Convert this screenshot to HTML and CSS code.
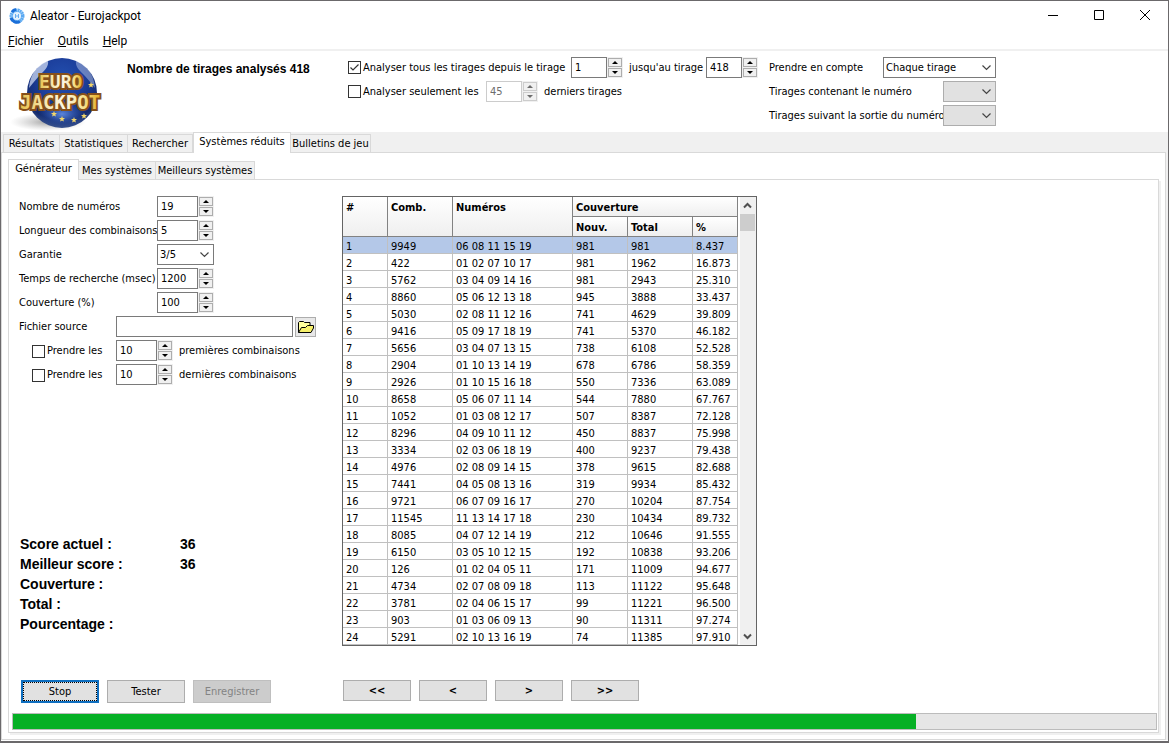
FILE: index.html
```
<!DOCTYPE html>
<html lang="fr">
<head>
    <meta charset="UTF-8">
    <meta name="viewport" content="width=device-width, initial-scale=1.0">
    <title>Aleator - Eurojackpot</title>
    <link rel="stylesheet" href="styles.css">
</head>
<body>
<div class="window">

  <header class="titlebar">
    <svg class="app-icon" viewBox="0 0 16 16">
      <circle cx="8" cy="8" r="5.500" fill="#b9dcfa" stroke="#5aa9f2" stroke-width="4" stroke-dasharray="1.600 .4"/>
      <path d="M2 10a6.200 6.200 0 0 0 9 3.500M3 4a6 6 0 0 1 4-2.500" fill="none" stroke="#1c6fd8" stroke-width="3"/>
      <circle cx="8" cy="8" r="4" fill="#e4f2fe"/>
      <path d="M6.500 6v4M9.500 6v4M6.500 8h3" stroke="#69aef0" stroke-width="1"/>
    </svg>
    <span class="title">Aleator - Eurojackpot</span>
    <div class="window-buttons">
      <button type="button" aria-label="Réduire"><svg viewBox="0 0 12 12"><path d="M1 5.500h10"/></svg></button>
      <button type="button" aria-label="Agrandir"><svg viewBox="0 0 12 12"><path d="M1.500 .5h9v9h-9z"/></svg></button>
      <button type="button" aria-label="Fermer"><svg viewBox="0 0 12 12"><path d="M1 0l10 10M11 0L1 10"/></svg></button>
    </div>
  </header>

  <nav class="menu">
    <a href="#"><u>F</u>ichier</a>
    <a href="#"><u>O</u>utils</a>
    <a href="#"><u>H</u>elp</a>
  </nav>

  <section class="top">
    <svg class="logo" viewBox="0 0 100 80">
      <defs>
        <radialGradient id="ball" cx=".5" cy=".3" r=".7">
          <stop offset="0" stop-color="#2350b0"/>
          <stop offset=".45" stop-color="#1c3f9c"/>
          <stop offset=".85" stop-color="#13296b"/>
          <stop offset="1" stop-color="#3b5590"/>
        </radialGradient>
        <radialGradient id="shadow">
          <stop offset="0" stop-color="#777" stop-opacity=".7"/>
          <stop offset="1" stop-color="#aaa" stop-opacity="0"/>
        </radialGradient>
        <radialGradient id="glow">
          <stop offset="0" stop-color="#5b86dc"/>
          <stop offset="1" stop-color="#2a55b4" stop-opacity="0"/>
        </radialGradient>
        <linearGradient id="gold">
          <stop offset="0" stop-color="#e6c04c"/>
          <stop offset=".3" stop-color="#f6e6ac"/>
          <stop offset=".55" stop-color="#fbf6e6"/>
          <stop offset=".8" stop-color="#f6e08c"/>
          <stop offset="1" stop-color="#e3ac22"/>
        </linearGradient>
      </defs>
      <ellipse cx="38" cy="70" rx="38" ry="9" fill="url(#shadow)"/>
      <circle cx="52" cy="41" r="35" fill="url(#ball)"/>
      <ellipse cx="52" cy="62" rx="24" ry="13" fill="url(#glow)"/>
      <path d="M19 36C20 22 28 12 38 9c1 5-3 9-7 13-4 4-7 8-12 14z" fill="#dbe6fa" opacity=".7"/>
      <path d="M85 36C84 22 76 12 66 9c-1 5 3 9 7 13 4 4 7 8 12 14z" fill="#dbe6fa" opacity=".4"/>
      <g class="logo-text">
        <text class="logo-euro" x="29" y="36">EURO</text>
        <text x="10" y="57">JACKPOT</text>
      </g>
      <g fill="#f2d66a">
        <path id="star" d="M44 59l.8 2 2.200.1-1.700 1.400.6 2.100-1.900-1.200-1.900 1.200.6-2.100-1.700-1.400 2.200-.1z"/>
        <use href="#star" x="8" y="5"/>
        <use href="#star" x="20" y="6"/>
        <use href="#star" x="30" y="2"/>
        <use href="#star" x="37" y="-29"/>
      </g>
    </svg>
    <h1 class="draw-count">Nombre de tirages analysés 418</h1>

    <div class="range">
      <div class="line">
        <input class="check" type="checkbox" id="all" checked>
        <label class="all-label" for="all">Analyser tous les tirages depuis le tirage</label>
        <span class="spin small"><input type="text" value="1" aria-label="Premier tirage"><span class="arrows"><button type="button" class="up" aria-label="Plus"></button><button type="button" class="down" aria-label="Moins"></button></span></span>
        <label class="until" for="last">jusqu'au tirage</label>
        <span class="spin small"><input type="text" id="last" value="418"><span class="arrows"><button type="button" class="up" aria-label="Plus"></button><button type="button" class="down" aria-label="Moins"></button></span></span>
      </div>
      <div class="line">
        <input class="check" type="checkbox" id="only">
        <label class="only-label" for="only">Analyser seulement les</label>
        <span class="spin small off"><input type="text" id="count" value="45" disabled><span class="arrows"><button type="button" class="up" aria-label="Plus" disabled></button><button type="button" class="down" aria-label="Moins" disabled></button></span></span>
        <label class="after" for="count">derniers tirages</label>
      </div>
    </div>

    <div class="filters">
      <div class="line"><label for="mode">Prendre en compte</label><select id="mode" class="wide"><option>Chaque tirage</option></select></div>
      <div class="line"><label for="with">Tirages contenant le numéro</label><select id="with" disabled></select></div>
      <div class="line"><label for="next">Tirages suivant la sortie du numéro</label><select id="next" disabled></select></div>
    </div>
  </section>

  <nav class="tabs main-tabs">
    <button type="button">Résultats</button>
    <button type="button">Statistiques</button>
    <button type="button">Rechercher</button>
    <button type="button" class="active">Systèmes réduits</button>
    <button type="button">Bulletins de jeu</button>
  </nav>

  <main class="outer">
    <nav class="tabs sub-tabs">
      <button type="button" class="active">Générateur</button>
      <button type="button">Mes systèmes</button>
      <button type="button">Meilleurs systèmes</button>
    </nav>

    <div class="inner">
      <div class="work">
        <div class="side">
          <form class="settings">
            <div class="row"><label for="n">Nombre de numéros</label>
              <span class="spin"><input type="text" id="n" value="19"><span class="arrows"><button type="button" class="up" aria-label="Plus"></button><button type="button" class="down" aria-label="Moins"></button></span></span></div>
            <div class="row"><label for="len">Longueur des combinaisons</label>
              <span class="spin"><input type="text" id="len" value="5"><span class="arrows"><button type="button" class="up" aria-label="Plus"></button><button type="button" class="down" aria-label="Moins"></button></span></span></div>
            <div class="row"><label for="gar">Garantie</label>
              <select id="gar" class="guarantee"><option>3/5</option></select></div>
            <div class="row"><label for="time">Temps de recherche (msec)</label>
              <span class="spin"><input type="text" id="time" value="1200"><span class="arrows"><button type="button" class="up" aria-label="Plus"></button><button type="button" class="down" aria-label="Moins"></button></span></span></div>
            <div class="row"><label for="cov">Couverture (%)</label>
              <span class="spin"><input type="text" id="cov" value="100"><span class="arrows"><button type="button" class="up" aria-label="Plus"></button><button type="button" class="down" aria-label="Moins"></button></span></span></div>
            <div class="row source"><label for="src">Fichier source</label>
              <input class="field" type="text" id="src">
              <button type="button" class="browse" aria-label="Ouvrir">
                <svg viewBox="0 0 18 14"><path d="M1.500 12.500v-10l1-1h4l1 1h5.500v3.500" fill="#ffff9c" stroke="#000"/><path d="M1.500 12.500l3-5h4l2-2h6v2.500l-2.500 4.500z" fill="#f6f06a" stroke="#000"/></svg>
              </button></div>
            <div class="row take"><span><input class="check" type="checkbox" id="first"><label for="first">Prendre les</label></span>
              <span class="spin"><input type="text" id="firstn" value="10"><span class="arrows"><button type="button" class="up" aria-label="Plus"></button><button type="button" class="down" aria-label="Moins"></button></span></span>
              <label class="after" for="firstn">premières combinaisons</label></div>
            <div class="row take"><span><input class="check" type="checkbox" id="lastc"><label for="lastc">Prendre les</label></span>
              <span class="spin"><input type="text" id="lastn" value="10"><span class="arrows"><button type="button" class="up" aria-label="Plus"></button><button type="button" class="down" aria-label="Moins"></button></span></span>
              <label class="after" for="lastn">dernières combinaisons</label></div>
          </form>

          <dl class="scores">
            <dt>Score actuel :</dt><dd>36</dd>
            <dt>Meilleur score :</dt><dd>36</dd>
            <dt>Couverture :</dt><dd></dd>
            <dt>Total :</dt><dd></dd>
            <dt>Pourcentage :</dt><dd></dd>
          </dl>
        </div>

        <div class="grid-box">
          <table>
            <colgroup><col class="c-id"><col class="c-comb"><col class="c-num"><col class="c-new"><col class="c-total"><col class="c-pct"></colgroup>
            <thead>
              <tr><th rowspan="2">#</th><th rowspan="2">Comb.</th><th rowspan="2">Numéros</th><th colspan="3">Couverture</th></tr>
              <tr><th>Nouv.</th><th>Total</th><th>%</th></tr>
            </thead>
            <tbody>
              <tr class="selected"><td>1</td><td>9949</td><td>06 08 11 15 19</td><td>981</td><td>981</td><td>8.437</td></tr>
              <tr><td>2</td><td>422</td><td>01 02 07 10 17</td><td>981</td><td>1962</td><td>16.873</td></tr>
              <tr><td>3</td><td>5762</td><td>03 04 09 14 16</td><td>981</td><td>2943</td><td>25.310</td></tr>
              <tr><td>4</td><td>8860</td><td>05 06 12 13 18</td><td>945</td><td>3888</td><td>33.437</td></tr>
              <tr><td>5</td><td>5030</td><td>02 08 11 12 16</td><td>741</td><td>4629</td><td>39.809</td></tr>
              <tr><td>6</td><td>9416</td><td>05 09 17 18 19</td><td>741</td><td>5370</td><td>46.182</td></tr>
              <tr><td>7</td><td>5656</td><td>03 04 07 13 15</td><td>738</td><td>6108</td><td>52.528</td></tr>
              <tr><td>8</td><td>2904</td><td>01 10 13 14 19</td><td>678</td><td>6786</td><td>58.359</td></tr>
              <tr><td>9</td><td>2926</td><td>01 10 15 16 18</td><td>550</td><td>7336</td><td>63.089</td></tr>
              <tr><td>10</td><td>8658</td><td>05 06 07 11 14</td><td>544</td><td>7880</td><td>67.767</td></tr>
              <tr><td>11</td><td>1052</td><td>01 03 08 12 17</td><td>507</td><td>8387</td><td>72.128</td></tr>
              <tr><td>12</td><td>8296</td><td>04 09 10 11 12</td><td>450</td><td>8837</td><td>75.998</td></tr>
              <tr><td>13</td><td>3334</td><td>02 03 06 18 19</td><td>400</td><td>9237</td><td>79.438</td></tr>
              <tr><td>14</td><td>4976</td><td>02 08 09 14 15</td><td>378</td><td>9615</td><td>82.688</td></tr>
              <tr><td>15</td><td>7441</td><td>04 05 08 13 16</td><td>319</td><td>9934</td><td>85.432</td></tr>
              <tr><td>16</td><td>9721</td><td>06 07 09 16 17</td><td>270</td><td>10204</td><td>87.754</td></tr>
              <tr><td>17</td><td>11545</td><td>11 13 14 17 18</td><td>230</td><td>10434</td><td>89.732</td></tr>
              <tr><td>18</td><td>8085</td><td>04 07 12 14 19</td><td>212</td><td>10646</td><td>91.555</td></tr>
              <tr><td>19</td><td>6150</td><td>03 05 10 12 15</td><td>192</td><td>10838</td><td>93.206</td></tr>
              <tr><td>20</td><td>126</td><td>01 02 04 05 11</td><td>171</td><td>11009</td><td>94.677</td></tr>
              <tr><td>21</td><td>4734</td><td>02 07 08 09 18</td><td>113</td><td>11122</td><td>95.648</td></tr>
              <tr><td>22</td><td>3781</td><td>02 04 06 15 17</td><td>99</td><td>11221</td><td>96.500</td></tr>
              <tr><td>23</td><td>903</td><td>01 03 06 09 13</td><td>90</td><td>11311</td><td>97.274</td></tr>
              <tr><td>24</td><td>5291</td><td>02 10 13 16 19</td><td>74</td><td>11385</td><td>97.910</td></tr>
            </tbody>
          </table>
          <div class="scrollbar">
            <svg viewBox="0 0 15 17"><path d="M4 10.500L7.500 7l3.500 3.500"/></svg>
            <div class="thumb"></div>
            <svg class="bottom" viewBox="0 0 15 17"><path d="M4 6.500L7.500 10 11 6.500"/></svg>
          </div>
        </div>
      </div>

      <div class="actions">
        <div class="run">
          <button type="button" class="btn default">Stop</button>
          <button type="button" class="btn">Tester</button>
          <button type="button" class="btn" disabled>Enregistrer</button>
        </div>
        <div class="pager">
          <button type="button" class="btn">&lt;&lt;</button>
          <button type="button" class="btn">&lt;</button>
          <button type="button" class="btn">&gt;</button>
          <button type="button" class="btn">&gt;&gt;</button>
        </div>
      </div>

      <div class="progress"><div class="bar" style="width: 79%"></div></div>
    </div>
  </main>
</div>
</body>
</html>
```
FILE: styles.css
```
* {
  box-sizing: border-box;
}

body {
  margin: 0;
  background: #f0f0f0;
  font-family: "DejaVu Sans Condensed", "Noto Sans", sans-serif;
  font-size: 11px;
  line-height: 14px;
  color: #000;
}

button, input, select {
  font: inherit;
  color: inherit;
  border-radius: 0;
  margin: 0;
}

.window {
  min-height: 100vh;
  display: flex;
  flex-direction: column;
  border: 1px solid #6b696b;
  border-bottom-width: 2px;
  background: #fff;
}

/* title and menu */
.titlebar {
  display: flex;
  align-items: center;
  height: 29px;
  padding-left: 8px;
  font-family: Roboto, "Noto Sans", sans-serif;
  font-size: 12px;
}

.app-icon {
  width: 16px;
  height: 16px;
  margin-right: 5px;
}

.window-buttons {
  display: flex;
  margin-left: auto;
}

.window-buttons button {
  width: 46px;
  height: 28px;
  padding: 0;
  border: none;
  background: none;
}

.window-buttons svg {
  display: block;
  width: 12px;
  height: 12px;
  margin: auto;
  fill: none;
  stroke: #000;
}

.menu {
  display: flex;
  gap: 14px;
  height: 21px;
  padding: 4px 7px 1px;
  border-bottom: 2px solid #f0f0f0;
  font-family: Roboto, "Noto Sans", sans-serif;
  font-size: 12px;
}

.menu a {
  color: #000;
  text-decoration: none;
}

/* top panel */
.top {
  display: flex;
  height: 81px;
  padding-top: 6px;
  padding-left: 9px;
}

.logo {
  flex: none;
  width: 100px;
  height: 80px;
  margin-top: -5px;
}

.logo-text {
  font-family: "DejaVu Sans Mono", monospace;
  font-weight: bold;
  font-size: 19px;
  fill: url(#gold);
  stroke: #86501a;
  stroke-width: 4px;
  paint-order: stroke;
}

.logo-euro {
  font-size: 18px;
}

.draw-count {
  width: 221px;
  margin: 5px 0 0 17px;
  font-family: "Liberation Sans", sans-serif;
  font-size: 12px;
  line-height: 14px;
}

.line {
  display: flex;
  align-items: center;
  height: 21px;
  margin-bottom: 3px;
  white-space: nowrap;
}

.range {
  width: 421px;
}

.all-label {
  width: 208px;
}

.only-label {
  width: 123px;
}

.until {
  width: 77px;
}

.until, .after {
  margin-left: 6px;
}

.filters {
  width: 227px;
}

.filters .line {
  justify-content: space-between;
}

.filters label {
  min-width: 0;
}

/* fields */
.check {
  appearance: none;
  flex: none;
  width: 13px;
  height: 13px;
  margin-right: 2px;
  border: 1px solid #333;
  background: #fff;
}

.check:checked {
  background: #fff url("data:image/svg+xml,%3Csvg xmlns='http://www.w3.org/2000/svg' viewBox='0 0 11 11'%3E%3Cpath d='M1.500 5.500l2.500 2.500 5.500-5.500' fill='none' stroke='%23333' stroke-width='1.200'/%3E%3C/svg%3E");
}

.spin {
  display: flex;
  align-items: center;
}

.spin input, .field {
  width: 41px;
  height: 21px;
  padding: 0 3px;
  border: 1px solid #7a7a7a;
  background: #fff;
}

.spin.small input {
  width: 36px;
}

.arrows {
  display: flex;
  flex-direction: column;
  gap: 1px;
  padding: 1px;
  background: #f0f0f0;
}

.arrows button {
  display: flex;
  align-items: center;
  justify-content: center;
  width: 14px;
  height: 9px;
  padding: 0;
  border: 1px solid #adadad;
  background: #f0f0f0;
}

.arrows button::before {
  content: "";
  border: 3px solid transparent;
}

.arrows .up::before {
  border-top: none;
  border-bottom-color: #000;
}

.arrows .down::before {
  border-bottom: none;
  border-top-color: #000;
}

.off input {
  border-color: #ccc;
  color: #6d6d6d;
}

.off .arrows button {
  border-color: #ccc;
}

.off .up::before {
  border-bottom-color: #6d6d6d;
}

.off .down::before {
  border-top-color: #6d6d6d;
}

select {
  appearance: none;
  flex: none;
  width: 53px;
  height: 21px;
  padding: 0 2px;
  border: 1px solid #7a7a7a;
  background: #fff url("data:image/svg+xml,%3Csvg xmlns='http://www.w3.org/2000/svg' width='9' height='6'%3E%3Cpath d='M.5.500l4 4 4-4' fill='none' stroke='%23444' stroke-width='1.200'/%3E%3C/svg%3E") no-repeat right 4px center;
}

select:disabled {
  border-color: #adadad;
  background-color: #e1e1e1;
  opacity: 1;
}

select.wide {
  width: 113px;
}

select.guarantee {
  width: 57px;
}

/* tabs */
.tabs {
  display: grid;
  align-items: end;
}

.tabs button {
  height: 18px;
  padding: 0;
  border: 1px solid #d9d9d9;
  border-left: none;
  border-bottom: none;
  background: #f0f0f0;
  white-space: nowrap;
}

.tabs button:first-child {
  border-left: 1px solid #d9d9d9;
}

.tabs .active {
  position: relative;
  height: 21px;
  margin-bottom: -1px;
  padding-bottom: 2px;
  border-left: 1px solid #d9d9d9;
  background: #fff;
}

.main-tabs {
  grid-template-columns: 57px 68px 65px 98px 80px;
  height: 20px;
  padding-left: 2px;
  background: #f0f0f0;
}

.sub-tabs {
  grid-template-columns: 71px 77px 99px;
}

.outer {
  flex: 1;
  display: flex;
  flex-direction: column;
  margin: 0 2px 1px 0;
  padding: 6px;
  border: 1px solid #d9d9d9;
  box-shadow: 2px 0 #f0f0f0;
}

.inner {
  flex: 1;
  display: flex;
  flex-direction: column;
  padding: 16px 1px 2px 3px;
  border: 1px solid #d9d9d9;
  box-shadow: 2px 2px #f0f0f0;
}

/* generator */
.work {
  display: flex;
}

.side {
  display: flex;
  flex-direction: column;
  justify-content: space-between;
  width: 330px;
  padding: 0 0 12px 7px;
}

.row {
  display: grid;
  grid-template-columns: 138px auto;
  justify-content: start;
  align-items: center;
  height: 21px;
  margin-bottom: 3px;
  white-space: nowrap;
}

.row.source {
  grid-template-columns: 97px 177px auto;
}

.row.source .field {
  width: 100%;
}

.row.take {
  grid-template-columns: 97px auto auto;
}

.take > span:first-child {
  display: flex;
  align-items: center;
  padding: 1px 0 0 13px;
}

.browse {
  display: flex;
  align-items: center;
  justify-content: center;
  width: 21px;
  height: 20px;
  margin-left: 2px;
  padding: 0;
  border: 1px solid #adadad;
  background: #e8e8e8;
}

.browse svg {
  width: 18px;
  height: 14px;
}

.scores {
  display: grid;
  grid-template-columns: 160px auto;
  grid-auto-rows: 20px;
  align-items: center;
  margin: 0;
  padding-left: 1px;
  font-family: "Liberation Sans", sans-serif;
  font-size: 14px;
  font-weight: bold;
}

.scores dd {
  margin: 0;
}

.grid-box {
  display: flex;
  border: 1px solid #646464;
}

table {
  width: 395px;
  table-layout: fixed;
  border-collapse: separate;
  border-spacing: 0;
}

.c-id { width: 45px; }
.c-comb { width: 65px; }
.c-num { width: 120px; }
.c-new { width: 55px; }
.c-total { width: 65px; }
.c-pct { width: 45px; }

th {
  height: 20px;
  padding: 4px 3px 1px;
  border-right: 1px solid #828282;
  border-bottom: 1px solid #828282;
  background: linear-gradient(#fff, #efefef);
  text-align: left;
  vertical-align: top;
}

td {
  height: 17px;
  padding: 4px 3px 0;
  border-right: 1px solid #c0c0c0;
  border-bottom: 1px solid #c0c0c0;
  line-height: 12px;
  white-space: nowrap;
}

.selected td {
  background: #b4c8e8;
}

.scrollbar {
  display: flex;
  flex-direction: column;
  width: 16px;
  margin-left: 2px;
  background: #f0f0f0;
}

.scrollbar svg {
  width: 15px;
  height: 17px;
  fill: none;
  stroke: #505050;
  stroke-width: 2;
}

.scrollbar .bottom {
  margin-top: auto;
}

.thumb {
  width: 15px;
  height: 17px;
  background: #cdcdcd;
}

.actions {
  display: flex;
  align-items: flex-start;
  margin-top: 34px;
}

.run {
  display: flex;
  gap: 8px;
  width: 331px;
  padding-left: 9px;
}

.pager {
  display: flex;
  gap: 8px;
}

.btn {
  width: 78px;
  height: 23px;
  padding: 0;
  border: 1px solid #adadad;
  background: #e1e1e1;
}

.btn:disabled {
  border-color: #bfbfbf;
  background: #ccc;
  color: #838383;
}

.btn.default {
  border: 2px solid #0f6fc0;
  outline: 1px dotted #000;
  outline-offset: -3px;
}

.pager .btn {
  width: 68px;
  height: 21px;
  font-weight: bold;
}

.progress {
  height: 17px;
  margin-top: auto;
  border: 1px solid #bcbcbc;
  background: #e6e6e6;
}

.bar {
  height: 100%;
  background: #06b025;
}
```
